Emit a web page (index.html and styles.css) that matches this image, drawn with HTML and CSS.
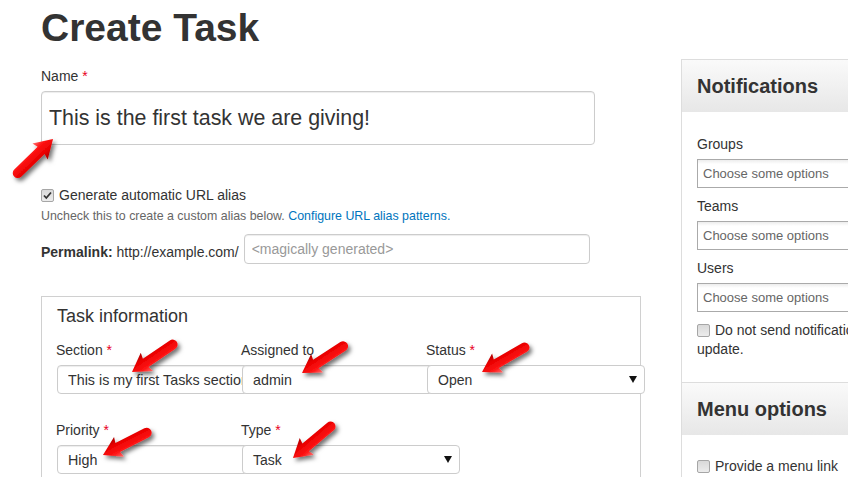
FILE: index.html
```html
<!DOCTYPE html>
<html lang="en">
<head>
<meta charset="utf-8">
<title>Create Task</title>
<link rel="stylesheet" href="styles.css">
</head>
<body>
<div class="page">
  <main class="main">
    <h1 class="title">Create Task</h1>

    <div class="field-name">
      <label class="label">Name <span class="req">*</span></label>
      <input class="input input-lg" type="text" value="This is the first task we are giving!">
    </div>

    <div class="check-row">
      <span class="cbox"><svg class="tick" viewBox="0 0 13 13" width="13" height="13"><path d="M3 6.5 L5.3 9 L10 3.5" fill="none" stroke="#333" stroke-width="1.8"/></svg></span>
      <span>Generate automatic URL alias</span>
    </div>
    <div class="help">Uncheck this to create a custom alias below. <a class="link" href="#">Configure URL alias patterns.</a></div>

    <div class="permalink">
      <span class="perma-label"><strong>Permalink:</strong> http://example.com/</span>
      <input class="input input-perma" type="text" placeholder="<magically generated>">
    </div>

    <section class="fieldset">
      <div class="legend">Task information</div>
      <div class="grid">
        <div class="cell">
          <label class="label">Section <span class="req">*</span></label>
          <input class="input input-sm" type="text" value="This is my first Tasks section">
        </div>
        <div class="cell">
          <label class="label">Assigned to</label>
          <input class="input input-sm" type="text" value="admin">
        </div>
        <div class="cell">
          <label class="label">Status <span class="req">*</span></label>
          <div class="input select"><span>Open</span><span class="caret"></span></div>
        </div>
        <div class="cell">
          <label class="label">Priority <span class="req">*</span></label>
          <input class="input input-sm" type="text" value="High">
        </div>
        <div class="cell">
          <label class="label">Type <span class="req">*</span></label>
          <div class="input select"><span>Task</span><span class="caret"></span></div>
        </div>
      </div>
    </section>
  </main>

  <aside class="sidebar">
    <div class="panel">
      <div class="panel-head">Notifications</div>
      <div class="panel-body">
        <label class="sb-label">Groups</label>
        <div class="chosen">Choose some options</div>
        <label class="sb-label">Teams</label>
        <div class="chosen">Choose some options</div>
        <label class="sb-label">Users</label>
        <div class="chosen chosen-last">Choose some options</div>
        <p class="sb-check"><span class="cbox cbox-inline"></span>Do not send notifications for this update.</p>
      </div>
    </div>
    <div class="panel panel-sep">
      <div class="panel-head">Menu options</div>
      <div class="panel-body">
        <p class="sb-check"><span class="cbox cbox-inline"></span>Provide a menu link</p>
      </div>
    </div>
  </aside>
</div>

<svg class="arrows" width="848" height="477" viewBox="0 0 848 477">
  <defs>
    <linearGradient id="red" gradientUnits="userSpaceOnUse" x1="0" y1="-11" x2="0" y2="11">
      <stop offset="0" stop-color="#ff7070"/>
      <stop offset="0.3" stop-color="#ff1414"/>
      <stop offset="0.7" stop-color="#e80000"/>
      <stop offset="1" stop-color="#a80000"/>
    </linearGradient>
    <filter id="shadow" x="-30%" y="-30%" width="160%" height="160%">
      <feDropShadow dx="2.5" dy="3" stdDeviation="2" flood-color="#000" flood-opacity="0.55"/>
    </filter>
    <path id="arrow" d="M0 0 L-18 -11 L-16.5 -5 L-49 -5 A5 5 0 0 0 -49 5 L-16.5 5 L-18 11 Z" fill="url(#red)"/>
  </defs>
  <g filter="url(#shadow)"><use href="#arrow" transform="translate(53 139) rotate(-44)"/></g>
  <g filter="url(#shadow)"><use href="#arrow" transform="translate(132 372) rotate(146)"/></g>
  <g filter="url(#shadow)"><use href="#arrow" transform="translate(302 373) rotate(147)"/></g>
  <g filter="url(#shadow)"><use href="#arrow" transform="translate(482 372) rotate(150)"/></g>
  <g filter="url(#shadow)"><use href="#arrow" transform="translate(103 455) rotate(153)"/></g>
  <g filter="url(#shadow)"><use href="#arrow" transform="translate(293 458) rotate(140)"/></g>
</svg>
</body>
</html>
```

FILE: styles.css
```css
* {
  box-sizing: border-box;
}

html,
body {
  margin: 0;
  padding: 0;
}

body {
  width: 848px;
  height: 477px;
  overflow: hidden;
  position: relative;
  background: #fff;
  color: #333;
  font-family: "Liberation Sans", Arial, sans-serif;
  font-size: 14px;
  line-height: 20px;
}

.page {
  display: flex;
  align-items: flex-start;
  padding-left: 41px;
}

.main {
  flex: none;
  width: 600px;
}

.title {
  margin: 0;
  padding-top: 6px;
  font-size: 39px;
  line-height: 44px;
  font-weight: bold;
  color: #333;
}

.field-name {
  margin-top: 16px;
}

.label {
  display: block;
  font-size: 14px;
  line-height: 20px;
  font-weight: normal;
}

.req {
  color: #e8001c;
}

.input {
  display: block;
  margin: 0;
  font-family: "Liberation Sans", Arial, sans-serif;
  color: #333;
  background: #fff;
  border: 1px solid #ccc;
  border-radius: 4px;
  box-shadow: inset 0 1px 1px rgba(0, 0, 0, 0.075);
  outline: none;
}

.input-lg {
  margin-top: 5px;
  width: 554px;
  height: 54px;
  padding: 0 7px;
  font-size: 21.4px;
}

.check-row {
  margin-top: 40px;
  display: flex;
  align-items: center;
  height: 20px;
}

.cbox {
  display: inline-block;
  flex: none;
  width: 13px;
  height: 13px;
  margin-right: 5px;
  border: 1px solid #a6a6a6;
  border-radius: 2px;
  background: linear-gradient(#d9d9d9, #ececec);
  position: relative;
}

.tick {
  position: absolute;
  left: -1px;
  top: -1px;
}

.cbox-inline {
  vertical-align: -2px;
  margin-right: 5px;
}

.help {
  margin-top: 3px;
  font-size: 12.4px;
  line-height: 17px;
  color: #666;
}

.link {
  color: #0074bd;
  text-decoration: none;
}

.permalink {
  margin-top: 9px;
  display: flex;
  align-items: flex-start;
}

.perma-label {
  padding-top: 8px;
  white-space: nowrap;
  margin-right: 5px;
}

.input-perma {
  width: 346px;
  height: 30px;
  padding: 0 7px;
  font-size: 14px;
}

.input-perma::placeholder {
  color: #999;
}

.fieldset {
  margin-top: 32px;
  border: 1px solid #d0d0d0;
  padding: 7px 15px 40px;
  height: 220px;
}

.legend {
  font-size: 18px;
  line-height: 24px;
}

.grid {
  margin-top: 12px;
  display: grid;
  grid-template-columns: 185px 185px 185px;
  row-gap: 26px;
}

.cell {
  min-width: 0;
}

.grid .label {
  margin-left: -1px;
}

.input-sm {
  margin-top: 5px;
  width: 218px;
  height: 29px;
  padding: 0 10px;
  font-size: 14.3px;
}

.select {
  margin-top: 5px;
  width: 218px;
  height: 29px;
  padding: 0 7px 0 10px;
  font-size: 14px;
  display: flex;
  align-items: center;
  justify-content: space-between;
  box-shadow: none;
}

.caret {
  width: 0;
  height: 0;
  border-left: 4px solid transparent;
  border-right: 4px solid transparent;
  border-top: 7px solid #111;
}

.sidebar {
  flex: none;
  width: 262px;
  margin-left: 40px;
  margin-top: 59px;
  border-left: 1px solid #ddd;
  border-top: 1px solid #ddd;
}

.panel-sep {
  border-top: 1px solid #ddd;
}

.panel-head {
  padding: 14px 16px 14px 15px;
  background: linear-gradient(#fafafa, #e7e7e7);
  font-size: 20px;
  line-height: 24px;
  font-weight: bold;
  color: #333;
}

.panel-body {
  padding: 22px 15px 23px;
}

.sb-label {
  display: block;
  line-height: 20px;
}

.chosen {
  margin-top: 5px;
  margin-bottom: 8px;
  height: 29px;
  padding-left: 5px;
  padding-top: 1px;
  border: 1px solid #aaa;
  background: linear-gradient(#eee 1%, #fff 15%);
  font-size: 13px;
  color: #666;
  display: flex;
  align-items: center;
}

.chosen-last {
  margin-bottom: 9px;
}

.sb-check {
  margin: 0;
  line-height: 19px;
}

.arrows {
  position: absolute;
  left: 0;
  top: 0;
  pointer-events: none;
}
```
